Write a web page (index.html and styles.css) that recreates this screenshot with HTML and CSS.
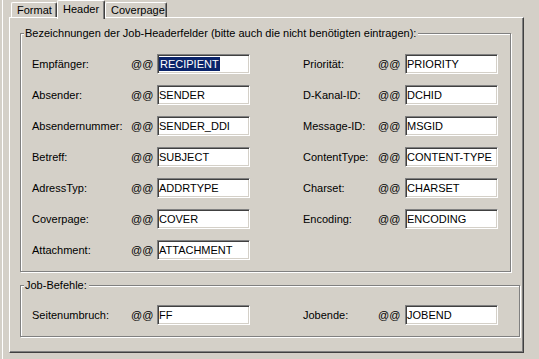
FILE: index.html
```html
<!DOCTYPE html>
<html>
	<head>
		<meta charset="utf-8">
		<title>Header</title>
		<link rel="stylesheet" href="styles.css">
	</head>
	<body>
		<div class="dialog">
			<ul class="tabs">
				<li class="tab">Format</li>
				<li class="tab active">Header</li>
				<li class="tab">Coverpage</li>
			</ul>
			<div class="panel">
				<fieldset class="group">
					<legend>Bezeichnungen der Job-Headerfelder (bitte auch die nicht benötigten eintragen):</legend>
					<div class="rows">
						<span class="label">Empfänger:</span><span class="at">@@</span><div class="field"><span class="sel">RECIPIENT</span></div>
						<span class="label">Priorität:</span><span class="at">@@</span><div class="field">PRIORITY</div>

						<span class="label">Absender:</span><span class="at">@@</span><div class="field">SENDER</div>
						<span class="label">D-Kanal-ID:</span><span class="at">@@</span><div class="field">DCHID</div>

						<span class="label">Absendernummer:</span><span class="at">@@</span><div class="field">SENDER_DDI</div>
						<span class="label">Message-ID:</span><span class="at">@@</span><div class="field">MSGID</div>

						<span class="label">Betreff:</span><span class="at">@@</span><div class="field">SUBJECT</div>
						<span class="label">ContentType:</span><span class="at">@@</span><div class="field">CONTENT-TYPE</div>

						<span class="label">AdressTyp:</span><span class="at">@@</span><div class="field">ADDRTYPE</div>
						<span class="label">Charset:</span><span class="at">@@</span><div class="field">CHARSET</div>

						<span class="label">Coverpage:</span><span class="at">@@</span><div class="field">COVER</div>
						<span class="label">Encoding:</span><span class="at">@@</span><div class="field">ENCODING</div>

						<span class="label">Attachment:</span><span class="at">@@</span><div class="field">ATTACHMENT</div>
					</div>
				</fieldset>
				<fieldset class="group jobs">
					<legend>Job-Befehle:</legend>
					<div class="rows">
						<span class="label">Seitenumbruch:</span><span class="at">@@</span><div class="field">FF</div>
						<span class="label">Jobende:</span><span class="at">@@</span><div class="field">JOBEND</div>
					</div>
				</fieldset>
			</div>
		</div>
	</body>
</html>
```

FILE: styles.css
```css
* {
	margin: 0;
	padding: 0;
	box-sizing: border-box;
}

ul {
	list-style: none;
}

body {
	background-color: #d4d0c8;
	font-family: "Liberation Sans", Arial, sans-serif;
	font-size: 11px;
	color: #000000;
}

.dialog {
	height: 359px;
	margin-left: 2px;
	border-left: 1px solid #ffffff;
}

/* Reiter oben */
.tabs {
	display: flex;
	align-items: flex-end;
	height: 17px;
	margin-left: 8px;
}

.tabs .tab {
	height: 15px;
	line-height: 14px;
	padding-left: 5px;
	border-top: 1px solid #ffffff;
	border-left: 1px solid #ffffff;
	border-right: 1px solid #404040;
	border-radius: 2px 2px 0 0;
	box-shadow: inset -1px 0 #808080;
	background-color: #d4d0c8;
}

.tabs .tab:nth-child(1) {
	width: 46px;
}

.tabs .tab.active {
	position: relative;
	z-index: 1;
	width: 48px;
	height: 19px;
	line-height: 16px;
	margin-bottom: -2px;
}

.tabs .tab:nth-child(3) {
	width: 62px;
}

.panel {
	width: 515px;
	height: 336px;
	margin-left: 6px;
	padding: 9px 0 0 10px;
	border-top: 1px solid #ffffff;
	border-left: 1px solid #ffffff;
	border-right: 1px solid #404040;
	border-bottom: 1px solid #404040;
	box-shadow: inset -1px -1px #808080;
}

/* Gruppenrahmen */
.group {
	width: 491px;
	padding: 14px 0 11px 11px;
	border: 1px solid #808080;
	box-shadow: inset 1px 1px #ffffff, 1px 1px #ffffff;
}

.group legend {
	margin-left: -8px;
	padding: 0 2px 0 1px;
	line-height: 13px;
	background-color: #d4d0c8;
}

.group.jobs {
	width: 500px;
	margin-top: 7px;
	padding-top: 13px;
}

.rows {
	display: grid;
	grid-template-columns: 99px 26px 93px 75px 27px 93px;
	grid-auto-rows: 20px;
	row-gap: 11px;
	align-items: center;
}

.rows .label:nth-child(6n+4) {
	margin-left: 53px;
}

.rows {
	grid-template-columns: 99px 26px 93px 128px 27px 93px;
}

.field {
	height: 20px;
	line-height: 18px;
	padding-left: 1px;
	background-color: #ffffff;
	border: 1px solid;
	border-color: #808080 #ffffff #ffffff #808080;
	box-shadow: inset 1px 1px #404040, inset -1px -1px #d4d0c8;
	white-space: nowrap;
	overflow: hidden;
}

.field .sel {
	display: inline-block;
	line-height: 14px;
	padding: 0 1px;
	background-color: #0a246a;
	color: #ffffff;
}
```
